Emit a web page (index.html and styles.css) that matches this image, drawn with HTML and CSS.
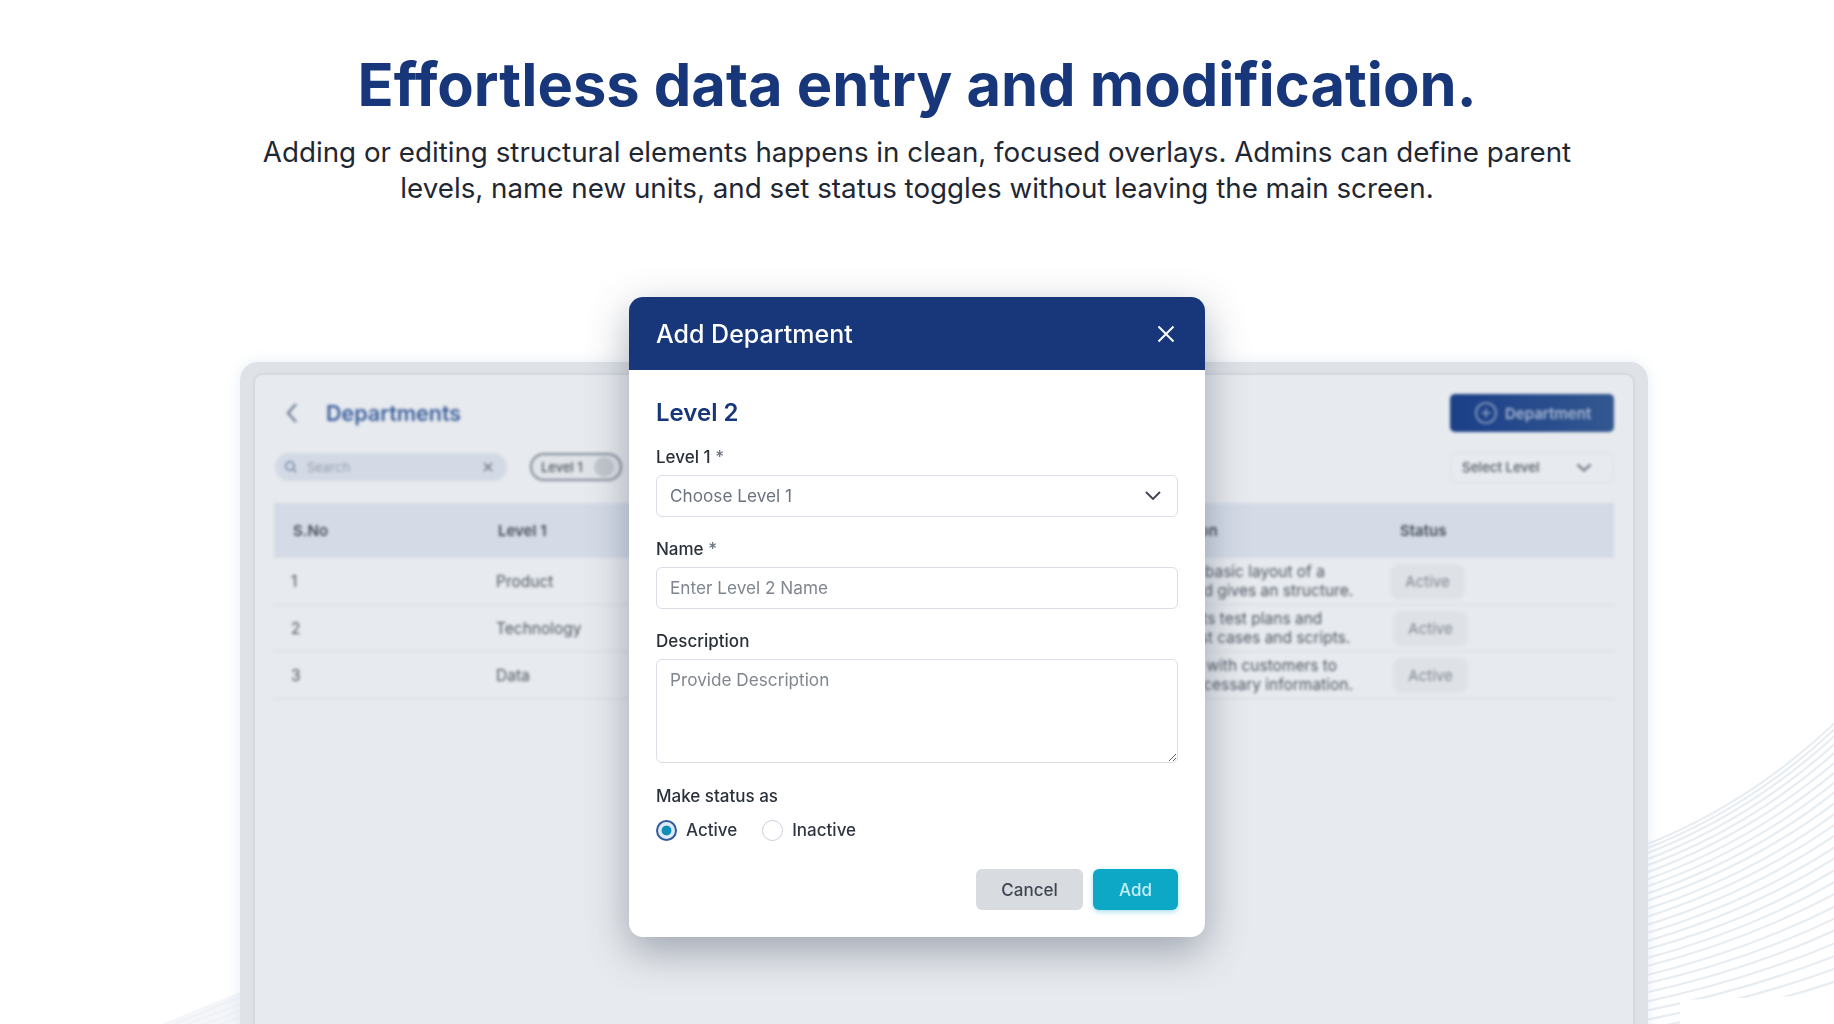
FILE: index.html
```html
<!DOCTYPE html>
<html lang="en">
<head>
<meta charset="utf-8">
<title>Effortless data entry and modification</title>
<link rel="stylesheet" href="styles.css">
</head>
<body>
<svg class="waves" viewBox="0 0 1834 1024" width="1834" height="1024" aria-hidden="true">
  <g class="wave-lines">
    <path d="M1640 847Q1750 805 1840 718"/><path d="M1640 851Q1750 810 1840 724"/><path d="M1640 856Q1750 815 1840 731"/><path d="M1640 862Q1750 822 1840 739"/><path d="M1640 868Q1750 829 1840 748"/>
    <path d="M1640 875Q1750 836 1840 758"/><path d="M1640 882Q1750 844 1840 768"/><path d="M1640 889Q1750 852 1840 778"/><path d="M1640 896Q1750 860 1840 788"/><path d="M1640 903Q1750 868 1840 799"/>
    <path d="M1640 911Q1750 877 1840 810"/><path d="M1640 919Q1750 885 1840 821"/><path d="M1640 927Q1750 894 1840 832"/><path d="M1640 935Q1750 903 1840 844"/><path d="M1640 943Q1750 912 1840 855"/>
    <path d="M1640 951Q1750 922 1840 867"/><path d="M1640 960Q1750 931 1840 879"/><path d="M1640 968Q1750 940 1840 891"/><path d="M1640 977Q1750 950 1840 904"/><path d="M1640 985Q1750 960 1840 916"/>
    <path d="M1640 994Q1750 970 1840 928"/><path d="M1640 1003Q1750 980 1840 941"/><path d="M1640 1012Q1750 990 1840 954"/><path d="M1640 1021Q1750 1000 1840 967"/><path d="M1640 1030Q1750 1010 1840 980"/>
  </g>
  <polygon class="wave-mask" points="1680,1000 1834,995 1834,1024 1680,1024"/>
  <polygon class="wave-fill" points="162,1024 240,992 240,1024"/>
  <g class="wave-lines wave-lines-thin">
    <path d="M174 1024L245 995"/><path d="M188 1024L245 1002"/><path d="M204 1024L245 1009"/><path d="M220 1024L245 1016"/>
  </g>
</svg>

<header class="intro">
  <h1 class="intro-title">Effortless data entry and modification.</h1>
  <p class="intro-text">Adding or editing structural elements happens in clean, focused overlays. Admins can define parent<br>levels, name new units, and set status toggles without leaving the main screen.</p>
</header>

<main class="panel">
  <div class="panel-inner">
    <div class="toolbar">
      <div class="page-title">
        <svg class="back-icon" viewBox="0 0 14 22" width="14" height="22"><path d="M11 2 3 11l8 9"/></svg>
        <span>Departments</span>
      </div>
      <div class="add-btn">
        <svg class="add-icon" viewBox="0 0 24 24" width="24" height="24"><circle cx="12" cy="12" r="10"/><path d="M12 7.5v9M7.5 12h9"/></svg>
        <span>Department</span>
      </div>
    </div>
    <div class="filters">
      <div class="filter-left">
        <div class="search">
          <svg class="search-icon" viewBox="0 0 14 14" width="14" height="14"><circle cx="6" cy="6" r="4.2"/><path d="m9.2 9.2 3 3"/></svg>
          <span class="search-text">Search</span>
          <svg class="search-clear" viewBox="0 0 12 12" width="12" height="12"><path d="m2 2 8 8M10 2l-8 8"/></svg>
        </div>
        <div class="chip-filter"><span>Level 1</span><i class="chip-dot"></i></div>
      </div>
      <div class="level-select">
        <span>Select Level</span>
        <svg class="level-chevron" viewBox="0 0 16 9" width="16" height="9"><path d="m1.5 1.5 6.5 6 6.5-6"/></svg>
      </div>
    </div>
    <div class="grid-table">
      <div class="grid-row grid-head">
        <div>S.No</div><div>Level 1</div><div>Level 2</div><div>Description</div><div>Status</div>
      </div>
      <div class="grid-row">
        <div>1</div><div>Product</div><div>Design</div>
        <div class="desc">Show the basic layout of a<br>outline and gives an structure.</div>
        <div><span class="status status-first">Active</span></div>
      </div>
      <div class="grid-row">
        <div>2</div><div>Technology</div><div>Testing</div>
        <div class="desc">Documents test plans and<br>outline test cases and scripts.</div>
        <div><span class="status">Active</span></div>
      </div>
      <div class="grid-row">
        <div>3</div><div>Data</div><div>Support</div>
        <div class="desc">Converse with customers to<br>collect necessary information.</div>
        <div><span class="status">Active</span></div>
      </div>
    </div>
  </div>
</main>

<section class="modal" role="dialog" aria-label="Add Department">
  <div class="modal-head">
    <h2 class="modal-title">Add Department</h2>
    <svg class="close-icon" viewBox="0 0 18 18" width="18" height="18"><path d="m1.5 1.5 15 15M16.5 1.5l-15 15"/></svg>
  </div>
  <form class="modal-body">
    <h3 class="level-heading">Level 2</h3>
    <div class="field">
      <label class="field-label">Level 1 <span class="req">*</span></label>
      <div class="select-wrap">
        <select class="control select"><option>Choose Level 1</option></select>
        <svg class="select-chevron" viewBox="0 0 16 9" width="16" height="9"><path d="m1 1 7 7 7-7"/></svg>
      </div>
    </div>
    <div class="field">
      <label class="field-label">Name <span class="req">*</span></label>
      <input class="control" type="text" placeholder="Enter Level 2 Name">
    </div>
    <div class="field">
      <label class="field-label">Description</label>
      <textarea class="control textarea" placeholder="Provide Description"></textarea>
    </div>
    <div class="field">
      <span class="field-label status-label">Make status as</span>
      <div class="radios">
        <label class="radio"><input type="radio" name="status" checked><span>Active</span></label>
        <label class="radio"><input type="radio" name="status"><span>Inactive</span></label>
      </div>
    </div>
    <div class="actions">
      <button type="button" class="btn btn-cancel">Cancel</button>
      <button type="button" class="btn btn-add">Add</button>
    </div>
  </form>
</section>
</body>
</html>
```

FILE: styles.css
```css
* { box-sizing: border-box; }
html, body { margin: 0; padding: 0; }
body {
  position: relative;
  width: 1834px;
  height: 1024px;
  overflow: hidden;
  background: #fff;
  font-family: Inter, "Liberation Sans", sans-serif;
  color: #1f2733;
}

/* decorative background */
.waves { position: absolute; left: 0; top: 0; }
.wave-lines path { fill: none; stroke: #e8edf2; stroke-width: 2.2; }
.wave-lines-thin path { stroke: #eef1f4; stroke-width: 1.5; }
.wave-mask { fill: #fff; }
.wave-fill { fill: #f3f5f8; }

/* intro */
.intro { position: relative; text-align: center; padding-top: 49px; }
.intro-title {
  margin: 0;
  font-size: 59.6px;
  line-height: 70px;
  font-weight: 700;
  color: #17377a;
}
.intro-text {
  margin: 15px 0 0;
  font-size: 27.75px;
  line-height: 36px;
  color: #1f2733;
}

/* blurred background panel */
.panel {
  position: relative;
  width: 1408px;
  height: 680px;
  margin: 156px 0 0 240px;
  padding: 13px 15px 0;
  background: #dfe2e7;
  border-radius: 18px 18px 0 0;
  box-shadow: 0 0 14px rgba(205, 220, 235, .45);
}
.panel-inner {
  height: 100%;
  padding: 19px 19px 0;
  background: #e7eaee;
  border-radius: 8px 8px 0 0;
  box-shadow: 0 0 4px rgba(150, 160, 175, .35);
}
.toolbar {
  display: flex;
  justify-content: space-between;
  align-items: center;
  height: 38px;
  filter: blur(1.4px);
}
.page-title {
  display: flex;
  align-items: center;
  gap: 27px;
  padding-left: 11px;
  font-size: 21.5px;
  font-weight: 600;
  color: #3c5f9c;
}
.back-icon path { fill: none; stroke: #5f7190; stroke-width: 2; }
.add-btn {
  display: flex;
  align-items: center;
  gap: 7px;
  width: 164px;
  height: 38px;
  padding-left: 24px;
  border-radius: 5px;
  background: linear-gradient(90deg, #1b3f88, #33578f);
  font-size: 15px;
  font-weight: 600;
  color: #a9b8d2;
}
.add-icon circle, .add-icon path { fill: none; stroke: #8fa3c6; stroke-width: 1.6; }
.filters {
  display: flex;
  justify-content: space-between;
  align-items: center;
  height: 30px;
  margin-top: 20px;
  filter: blur(1.4px);
}
.filter-left { display: flex; align-items: center; gap: 23px; }
.search {
  display: flex;
  align-items: center;
  width: 232px;
  height: 28px;
  margin-left: 1px;
  padding: 0 13px 0 9px;
  border-radius: 14px;
  background: #d3dae5;
  font-size: 13px;
  color: #98a2b2;
}
.search-icon { fill: none; stroke: #6f87a8; stroke-width: 1.6; }
.search-text { flex: 1; margin-left: 9px; }
.search-clear { fill: none; stroke: #6d7480; stroke-width: 1.6; }
.chip-filter {
  display: flex;
  align-items: center;
  justify-content: space-between;
  width: 92px;
  height: 28px;
  padding: 0 6px 0 9px;
  border: 2px solid #7f8896;
  border-radius: 14px;
  background: #e0e3e7;
  font-size: 13px;
  font-weight: 500;
  color: #4e5662;
}
.chip-dot { width: 20px; height: 20px; border-radius: 50%; background: #c2c6cd; }
.level-select {
  display: flex;
  align-items: center;
  justify-content: space-between;
  width: 164px;
  height: 31px;
  padding: 0 21px 0 11px;
  border: 1px solid #dde1e7;
  border-radius: 4px;
  font-size: 13.4px;
  font-weight: 500;
  color: #4e5662;
}
.level-chevron path { fill: none; stroke: #5b6370; stroke-width: 1.8; }
.grid-table { margin-top: 21px; filter: blur(1.4px); }
.grid-row {
  display: grid;
  grid-template-columns: 205px 318px 318px 266px 234px;
  align-items: center;
  height: 47px;
  border-bottom: 1px solid #d9dde3;
  font-size: 15.5px;
  color: #4f5763;
}
.grid-row > div { padding-left: 17px; }
.grid-head {
  height: 55px;
  border-bottom: 0;
  background: #d4dbe7;
  font-size: 15px;
  font-weight: 600;
  color: #444c58;
}
.grid-head > div { padding-left: 19px; }
.desc { white-space: nowrap; line-height: 19px; }
.status {
  display: inline-block;
  width: 75px;
  height: 35px;
  margin-left: -5px;
  border-radius: 9px;
  background: #dee1e5;
  font-size: 15px;
  text-align: center;
  line-height: 35px;
  color: #7f8691;
}
.status-first { margin-left: -8px; }

/* modal */
.modal {
  position: absolute;
  left: 629px;
  top: 297px;
  width: 576px;
  border-radius: 14px;
  background: #fff;
  box-shadow: 0 14px 40px rgba(70, 80, 100, .45);
}
.modal-head {
  display: flex;
  align-items: center;
  justify-content: space-between;
  height: 73px;
  padding: 0 30px 0 27px;
  border-radius: 14px 14px 0 0;
  background: #17377a;
}
.modal-title {
  margin: 0;
  font-size: 25px;
  font-weight: 500;
  color: #fff;
}
.close-icon path { fill: none; stroke: #fff; stroke-width: 2; }
.modal-body { padding: 28px 27px 27px; }
.level-heading {
  margin: 0 0 18px;
  font-size: 24px;
  line-height: 30px;
  font-weight: 600;
  color: #17377a;
}
.field { margin-bottom: 21px; }
.field-label {
  display: block;
  margin-bottom: 7px;
  font-size: 17px;
  line-height: 22px;
  font-weight: 500;
  color: #2a303a;
}
.status-label { padding-top: 1px; }
.req { color: #6b7280; }
.select-wrap { position: relative; }
.control {
  display: block;
  width: 100%;
  height: 42px;
  padding: 0 13px 2px;
  border: 1.5px solid #d9dde5;
  border-radius: 6px;
  background: #fff;
  font: 400 17.2px Inter, "Liberation Sans", sans-serif;
  color: #6b7280;
  outline: none;
}
.control::placeholder { color: #80868f; opacity: 1; }
.select { appearance: none; }
.select-chevron {
  position: absolute;
  right: 17px;
  top: 16px;
  pointer-events: none;
}
.select-chevron path { fill: none; stroke: #3b4250; stroke-width: 1.8; }
.textarea { height: 104px; padding: 9px 13px; line-height: 22px; }
.radios { display: flex; gap: 25px; height: 24px; margin-top: 11px; }
.radio {
  display: flex;
  align-items: center;
  gap: 9px;
  font-size: 17px;
  font-weight: 500;
  color: #2f3642;
}
.radio input {
  appearance: none;
  width: 21px;
  height: 21px;
  margin: 0;
  border: 1.5px solid #c8ced8;
  border-radius: 50%;
  background: #fff;
}
.radio input:checked {
  border: 2px solid #2f5c9c;
  background: radial-gradient(circle, #0f8fb8 0 4.5px, #dfe9f3 5.3px 100%);
}
.actions { display: flex; justify-content: flex-end; gap: 10px; margin-top: 27px; }
.btn {
  height: 41px;
  border: 0;
  border-radius: 6px;
  font: 500 17px Inter, "Liberation Sans", sans-serif;
}
.btn-cancel { width: 107px; background: #d8dbdf; color: #3f4652; }
.btn-add {
  width: 85px;
  background: #0ea8c7;
  color: #c4edf4;
  box-shadow: 0 2px 5px rgba(14, 168, 199, .35);
}
```
